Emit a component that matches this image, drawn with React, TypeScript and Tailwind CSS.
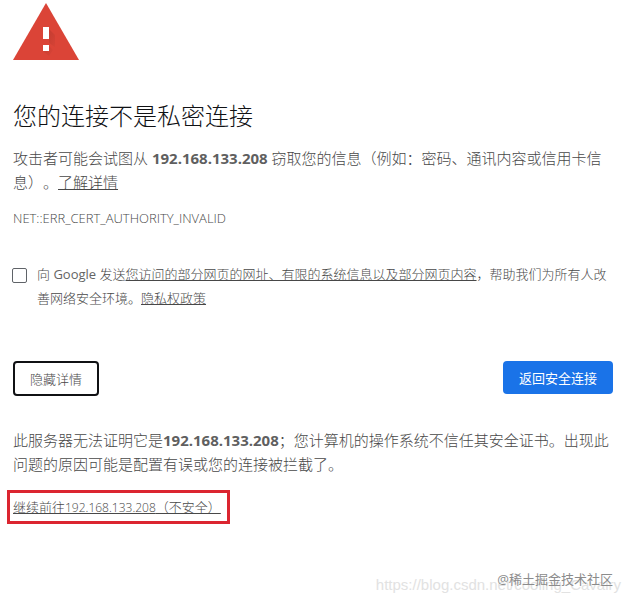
import React from "react";

const WarningIcon = () => (
  <svg width="66" height="57" viewBox="0 0 66 57" aria-hidden="true">
    <defs>
      <linearGradient id="shade" x1="0" y1="0" x2="1" y2="1">
        <stop offset="0" stopColor="#a8352a" />
        <stop offset="1" stopColor="#db4437" />
      </linearGradient>
    </defs>
    <path d="M33 0 66 57H0z" fill="#db4437" />
    <path d="M36 26 42 32V44L36 40zM36 43 40 47 36 53 30 48z" fill="url(#shade)" opacity=".6" />
    <path d="M30 24h6v12h-6zM30 42h6v6h-6z" fill="#fff" />
  </svg>
);

export default function App() {
  return (
    <main className="relative min-h-screen bg-white pt-[3px] pr-4 pb-16 pl-[13px] font-['Open_Sans','Noto_Sans_CJK_SC',sans-serif] text-[15px] leading-6 font-light text-[#484848] [text-spacing-trim:space-all]">
      <WarningIcon />

      <h1 className="mt-10 text-2xl text-[#101114]">您的连接不是私密连接</h1>
      <p className="mt-[14px]">
        攻击者可能会试图从 <strong className="font-bold text-[#5f5f5f]">192.168.133.208</strong>{" "}
        窃取您的信息（例如：密码、通讯内容或信用卡信息）。
        <a href="#details" className="underline">
          了解详情
        </a>
      </p>
      <p className="mt-3 text-[13px]">NET::ERR_CERT_AUTHORITY_INVALID</p>

      {/* Reporting opt-in */}
      <div className="mt-8 flex gap-2.5 text-[13px]">
        <input
          id="report"
          type="checkbox"
          className="-ml-px mt-1.5 size-[15px] shrink-0 appearance-none rounded-xs border border-[#5f6368] bg-white checked:bg-[#1a73e8]"
        />
        <label htmlFor="report">
          向 <span className="font-normal text-[#646464]">Google</span> 发送
          <a href="#report-info" className="underline">
            您访问的部分网页的网址、有限的系统信息以及部分网页内容
          </a>
          ，帮助我们为所有人改善网络安全环境。
          <a href="#privacy" className="underline">
            隐私权政策
          </a>
        </label>
      </div>

      {/* Actions */}
      <div className="mt-[51px] flex items-start justify-between text-[13px]">
        <button type="button" className="h-[35px] rounded-sm border-2 border-[#101114] px-[15px]">
          隐藏详情
        </button>
        <button type="button" className="h-[33px] rounded-sm bg-[#1a73e8] px-4 font-normal text-white">
          返回安全连接
        </button>
      </div>

      <p className="mt-8">
        此服务器无法证明它是
        <strong className="font-bold text-[#5f5f5f]">192.168.133.208</strong>
        ；您计算机的操作系统不信任其安全证书。出现此问题的原因可能是配置有误或您的连接被拦截了。
      </p>
      <p className="-ml-1.5 mt-[14px] text-[13px]">
        <a
          href="#proceed"
          className="inline-block border-[3px] border-[#db2530] py-0.5 pr-1.5 pl-[3px] underline"
        >
          继续前往<span className="text-xs">192.168.133.208</span>（不安全）
        </a>
      </p>

      {/* Watermarks */}
      <span className="absolute right-2 bottom-1.5 font-['Liberation_Sans',sans-serif] text-[15px] font-normal text-[#e2e2e2]">
        https://blog.csdn.net/cooling_Cavalry
      </span>
      <span className="absolute right-4 bottom-3 text-[13px] font-normal text-[#8c8c8c]">
        @稀土掘金技术社区
      </span>
    </main>
  );
}
